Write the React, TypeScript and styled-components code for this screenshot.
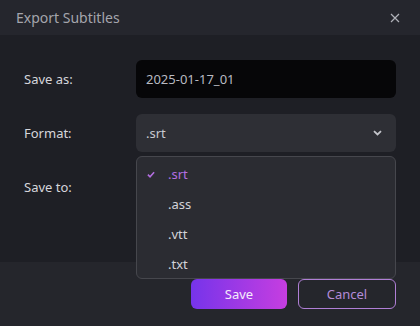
import React from 'react'
import styled, { createGlobalStyle } from 'styled-components'

const GlobalStyle = createGlobalStyle`
  html, body {
    margin: 0;
    padding: 0;
    background: #1e1f25;
  }
  * {
    box-sizing: border-box;
  }
`

const Dialog = styled.div`
  width: 420px;
  height: 326px;
  display: flex;
  flex-direction: column;
  background: #1e1f25;
  font-family: 'Noto Sans', 'Open Sans', sans-serif;
  font-size: 13px;
  color: #d8d8de;
  overflow: hidden;
`

const Header = styled.div`
  height: 35px;
  flex: none;
  display: flex;
  align-items: center;
  justify-content: space-between;
  padding: 0 20px 0 16px;
  background: #25262d;
`

const Title = styled.div`
  font-size: 14px;
  color: #a4a5ac;
`

const CloseButton = styled.button`
  border: 0;
  background: transparent;
  padding: 0;
  display: flex;
  color: #b0b1b8;
  cursor: pointer;
`

const Body = styled.div`
  flex: 1;
  display: flex;
  flex-direction: column;
  gap: 16px;
  padding: 25px 24px 0 24px;
`

const Row = styled.div`
  position: relative;
  display: grid;
  grid-template-columns: 112px 1fr;
  align-items: center;
  height: 38px;
`

const Label = styled.div`
  color: #d6d6dc;
`

const Field = styled.div<{ $dark?: boolean }>`
  height: 38px;
  border-radius: 6px;
  display: flex;
  align-items: center;
  justify-content: space-between;
  padding: 0 14px 0 10px;
  background: ${(p) => (p.$dark ? '#060608' : '#2e2f35')};
  color: ${(p) => (p.$dark ? '#b9bac1' : '#c8c9cf')};
`

const Menu = styled.div`
  position: absolute;
  left: 112px;
  right: 0;
  top: 42px;
  height: 123px;
  padding-top: 2px;
  border: 1px solid #46474d;
  border-radius: 6px;
  background: #2b2c32;
  z-index: 2;
`

const Option = styled.div<{ $active?: boolean }>`
  height: 30px;
  display: flex;
  align-items: center;
  gap: 0;
  color: ${(p) => (p.$active ? '#b36ee0' : '#d3d3d9')};
`

const CheckSlot = styled.span`
  width: 31px;
  display: flex;
  justify-content: flex-end;
  padding-right: 13px;
  padding-left: 10px;
`

const Footer = styled.div`
  height: 64px;
  flex: none;
  display: flex;
  justify-content: flex-end;
  gap: 11px;
  padding: 17px 24px 0 0;
  background: #25262c;
`

const Button = styled.button<{ $primary?: boolean }>`
  height: 30px;
  width: ${(p) => (p.$primary ? '96px' : '98px')};
  border-radius: 6px;
  font-family: inherit;
  font-size: 13px;
  cursor: pointer;
  border: ${(p) => (p.$primary ? '0' : '1px solid #b07fd6')};
  background: ${(p) =>
    p.$primary ? 'linear-gradient(90deg, #7634ea 0%, #c63ee0 100%)' : 'transparent'};
  color: ${(p) => (p.$primary ? '#f4ecfb' : '#b48bd8')};
`

const options = ['.srt', '.ass', '.vtt', '.txt']

export default function App() {
  return (
    <>
      <GlobalStyle />
      <Dialog>
        <Header>
          <Title>Export Subtitles</Title>
          <CloseButton>
            <svg width="10" height="10" viewBox="0 0 10 10">
              <path d="M1 1L9 9M9 1L1 9" stroke="currentColor" strokeWidth="1.2" />
            </svg>
          </CloseButton>
        </Header>
        <Body>
          <Row>
            <Label>Save as:</Label>
            <Field $dark>2025-01-17_01</Field>
          </Row>
          <Row>
            <Label>Format:</Label>
            <Field>
              <span>.srt</span>
              <svg width="9" height="6" viewBox="0 0 9 6">
                <path d="M1 1.2L4.5 4.5L8 1.2" stroke="#c4c5cb" strokeWidth="1.8" fill="none" />
              </svg>
            </Field>
            <Menu>
              {options.map((o, i) => (
                <Option key={o} $active={i === 0}>
                  <CheckSlot>
                    {i === 0 && (
                      <svg width="9" height="7" viewBox="0 0 9 7">
                        <path d="M1 3.6L3.4 6L8 1" stroke="#b36ee0" strokeWidth="1.8" fill="none" />
                      </svg>
                    )}
                  </CheckSlot>
                  {o}
                </Option>
              ))}
            </Menu>
          </Row>
          <Row>
            <Label>Save to:</Label>
          </Row>
        </Body>
        <Footer>
          <Button $primary>Save</Button>
          <Button>Cancel</Button>
        </Footer>
      </Dialog>
    </>
  )
}
